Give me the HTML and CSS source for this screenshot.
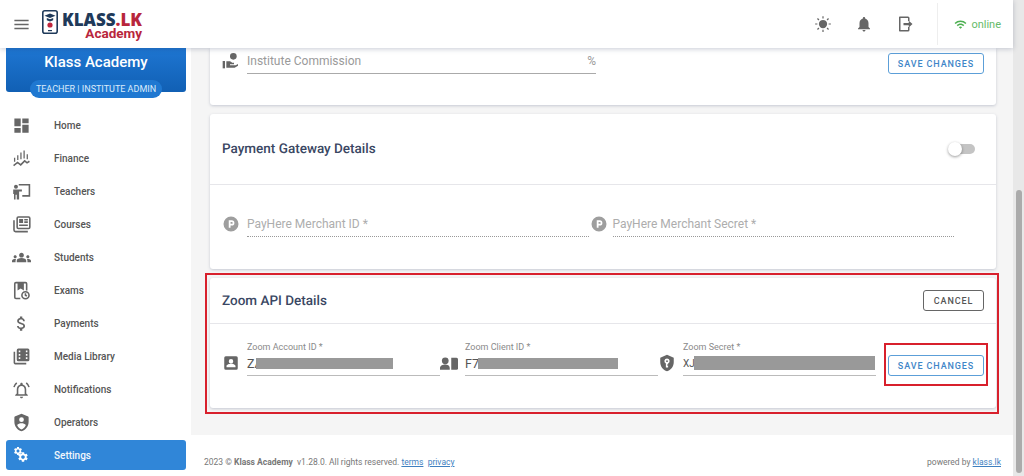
FILE: index.html
```html
<!DOCTYPE html>
<html lang="en">
<head>
    <meta charset="UTF-8">
    <meta name="viewport" content="width=device-width, initial-scale=1.0">
    <title>Klass Academy Settings</title>
    <link rel="stylesheet" href="styles.css">
</head>
<body>
    <svg class="defs" aria-hidden="true">
        <symbol id="gear" viewBox="0 0 24 24"><path d="M19.14 12.94c.04-.3.06-.61.06-.94 0-.32-.02-.64-.07-.94l2.03-1.58c.18-.14.23-.41.12-.61l-1.92-3.32c-.12-.22-.37-.29-.59-.22l-2.39.96c-.5-.38-1.03-.7-1.62-.94l-.36-2.54c-.04-.24-.24-.41-.48-.41h-3.84c-.24 0-.43.17-.47.41l-.36 2.54c-.59.24-1.13.57-1.62.94l-2.39-.96c-.22-.08-.47 0-.59.22L2.74 8.87c-.12.21-.08.47.12.61l2.03 1.58c-.05.3-.09.63-.09.94s.02.64.07.94l-2.03 1.58c-.18.14-.23.41-.12.61l1.92 3.32c.12.22.37.29.59.22l2.39-.96c.5.38 1.03.7 1.62.94l.36 2.54c.05.24.24.41.48.41h3.84c.24 0 .44-.17.47-.41l.36-2.54c.59-.24 1.13-.56 1.62-.94l2.39.96c.22.08.47 0 .59-.22l1.92-3.32c.12-.22.07-.47-.12-.61l-2.01-1.58zM12 15.6c-1.98 0-3.6-1.62-3.6-3.6s1.62-3.6 3.6-3.6 3.6 1.62 3.6 3.6-1.62 3.6-3.6 3.6z"/></symbol>
        <symbol id="payhere" viewBox="0 0 24 24"><path fill-rule="evenodd" d="M12 2a10 10 0 1 0 0 20 10 10 0 0 0 0-20zM9 7h4a3.5 3.5 0 0 1 0 7h-1.600v3H9zm2.400 2.200v2.600H13a1.300 1.300 0 0 0 0-2.600z"/></symbol>
    </svg>

    <div class="window">
        <header class="topbar">
            <svg class="menu-icon" viewBox="0 0 24 24"><path d="M3 18h18v-2H3v2zm0-5h18v-2H3v2zm0-7v2h18V6H3z"/></svg>
            <div class="logo">
                <svg class="logo-mark" viewBox="0 0 16 24">
                    <rect x="0.800" y="0.800" width="14.400" height="22.400" rx="2" fill="#fff" stroke="#1f3a5a" stroke-width="1.600"/>
                    <path d="M8 3.500l5.500 2.300L8 8.100 2.500 5.800z" fill="#1f3a5a"/>
                    <path d="M4.800 8v2.300L8 11.500l3.200-1.200V8L8 9.300z" fill="#1f3a5a"/>
                    <circle cx="8" cy="15" r="2.600" fill="#c0263c"/>
                    <rect x="6" y="20" width="4" height="1.200" fill="#1f3a5a"/>
                </svg>
                <div class="logo-text">
                    <div class="logo-top">KLASS<span class="logo-red">.LK</span></div>
                    <div class="logo-sub">Academy</div>
                </div>
            </div>
            <div class="top-actions">
                <svg class="top-icon" viewBox="0 0 24 24"><circle cx="12" cy="12" r="5.500"/><path d="M11.200 1.500h1.600v3h-1.600zM11.200 19.500h1.600v3h-1.600zM1.500 11.200h3v1.600h-3zM19.500 11.200h3v1.600h-3zM4 5.200L5.200 4l2 2L6 7.200zM16.800 18l1.200-1.200 2 2L18.800 20zM4 18.800l2-2L7.200 18l-2 2zM16.800 6l2-2L20 5.200l-2 2z"/></svg>
                <svg class="top-icon" viewBox="0 0 24 24"><path d="M12 22c1.100 0 2-.9 2-2h-4c0 1.100.89 2 2 2zm6-6v-5c0-3.070-1.640-5.640-4.500-6.320V4c0-.83-.67-1.500-1.500-1.500s-1.500.67-1.500 1.500v.68C7.630 5.360 6 7.920 6 11v5l-2 2v1h16v-1l-2-2z"/></svg>
                <svg class="top-icon" viewBox="0 0 24 24"><path d="M5 2h11a2 2 0 0 1 2 2v4h-2V4H6v16h10v-4h2v4a2 2 0 0 1-2 2H5a1 1 0 0 1-1-1V3a1 1 0 0 1 1-1z"/><path d="M10 10.500h7V7.500l5 4.500-5 4.500v-3h-7z"/></svg>
                <div class="status">
                    <svg class="wifi-icon" viewBox="0 0 24 24"><path d="M1 9l2 2c4.970-4.970 13.030-4.970 18 0l2-2C16.930 2.930 7.080 2.930 1 9zm8 8l3 3 3-3c-1.650-1.660-4.340-1.660-6 0zm-4-4l2 2c2.760-2.760 7.240-2.760 10 0l2-2C15.140 9.140 8.870 9.140 5 13z"/></svg>
                    <span>online</span>
                </div>
            </div>
        </header>

        <div class="layout">
            <aside class="sidebar">
                <div class="banner">
                    <div class="banner-title">Klass Academy</div>
                    <div class="banner-role">TEACHER | INSTITUTE ADMIN</div>
                </div>
                <nav class="nav">
                    <a class="nav-item">
                        <svg class="nav-icon" viewBox="0 0 24 24"><path d="M3 13h8V3H3v10zm0 8h8v-6H3v6zm10 0h8V11h-8v10zm0-18v6h8V3h-8z"/></svg>
                        Home
                    </a>
                    <a class="nav-item">
                        <svg class="nav-icon" viewBox="0 0 24 24"><path d="M6.500 8h1.600v6H6.500zM10.500 4.500h1.600V13h-1.600zM14.500 2h1.600v10h-1.600zM18.500 6.500h1.600V13h-1.600zM2.500 11h1.600v5H2.500z"/><path class="nav-line" d="M2 21l5-4 4 3 5-5 3 2.500 3-2"/></svg>
                        Finance
                    </a>
                    <a class="nav-item">
                        <svg class="nav-icon" viewBox="0 0 24 24"><circle cx="5" cy="6" r="2.500"/><path d="M1.500 9.500h11V12H9v10H6v-6H4.500v6H2.500v-7H1.500z"/><path class="nav-line" d="M8.500 3.500H22v14h-9"/></svg>
                        Teachers
                    </a>
                    <a class="nav-item">
                        <svg class="nav-icon" viewBox="0 0 24 24"><path class="nav-line" d="M2.500 6.500V19a2 2 0 0 0 2 2H20"/><rect class="nav-line" x="6.500" y="2.500" width="16" height="14.500" rx="1.500"/><path d="M9 5h5v5H9zM15.500 5h4.500v2h-4.500zM15.500 8h4.500v2h-4.500zM9 12h11v2H9z"/></svg>
                        Courses
                    </a>
                    <a class="nav-item">
                        <svg class="nav-icon" viewBox="0 0 24 24"><path d="M12 12.750c1.630 0 3.070.39 4.240.9 1.080.48 1.760 1.560 1.760 2.730V18H6v-1.610c0-1.180.68-2.260 1.760-2.730 1.170-.52 2.610-.91 4.240-.91zM4 13c1.100 0 2-.9 2-2s-.9-2-2-2-2 .9-2 2 .9 2 2 2zm1.130 1.100c-.37-.06-.74-.1-1.130-.1-.99 0-1.930.21-2.780.58C.48 14.900 0 15.620 0 16.430V18h4.500v-1.610c0-.83.23-1.610.63-2.290zM20 13c1.100 0 2-.9 2-2s-.9-2-2-2-2 .9-2 2 .9 2 2 2zm4 3.430c0-.81-.48-1.530-1.220-1.850-.85-.37-1.790-.58-2.780-.58-.39 0-.76.04-1.130.1.4.68.63 1.460.63 2.290V18H24v-1.570zM12 6c1.660 0 3 1.340 3 3s-1.340 3-3 3-3-1.340-3-3 1.340-3 3-3z"/></svg>
                        Students
                    </a>
                    <a class="nav-item">
                        <svg class="nav-icon" viewBox="0 0 24 24"><path class="nav-line" d="M10.500 22H5a1.500 1.500 0 0 1-1.500-1.500v-17A1.500 1.500 0 0 1 5 2h12a1.500 1.500 0 0 1 1.500 1.500V12"/><path d="M7 2.500h8V12l-4-2.500L7 12z"/><circle class="nav-line" cx="17" cy="18" r="4.500"/><path class="nav-line" d="M17 15.500V18l1.800 1.200"/></svg>
                        Exams
                    </a>
                    <a class="nav-item">
                        <svg class="nav-icon" viewBox="0 0 24 24"><path d="M11.800 10.900c-2.270-.59-3-1.200-3-2.150 0-1.090 1.010-1.850 2.700-1.850 1.780 0 2.440.85 2.500 2.100h2.210c-.07-1.720-1.120-3.300-3.210-3.810V3h-3v2.160c-1.940.42-3.500 1.680-3.500 3.610 0 2.310 1.910 3.460 4.700 4.130 2.500.6 3 1.480 3 2.410 0 .69-.49 1.790-2.700 1.790-2.060 0-2.870-.92-2.980-2.100h-2.200c.12 2.190 1.760 3.420 3.680 3.830V21h3v-2.150c1.950-.37 3.500-1.500 3.500-3.550 0-2.840-2.430-3.810-4.700-4.400z"/></svg>
                        Payments
                    </a>
                    <a class="nav-item">
                        <svg class="nav-icon" viewBox="0 0 24 24"><path d="M4 6H2v14c0 1.100.9 2 2 2h14v-2H4V6z"/><path fill-rule="evenodd" d="M8 2h12a2 2 0 0 1 2 2v12a2 2 0 0 1-2 2H8a2 2 0 0 1-2-2V4a2 2 0 0 1 2-2zm.5 2.500v2.200h2V4.500zm0 4.200v2.200h2V8.700zm0 4.200v2.200h2v-2.200zm9-8.400v2.200h2V4.500zm0 4.200v2.200h2V8.700zm0 4.200v2.200h2v-2.200z"/></svg>
                        Media Library
                    </a>
                    <a class="nav-item">
                        <svg class="nav-icon" viewBox="0 0 24 24"><path d="M12 23c1.100 0 2-.9 2-2h-4c0 1.100.9 2 2 2zm6-6v-5c0-3.070-1.630-5.640-4.500-6.320V5c0-.83-.67-1.500-1.500-1.500s-1.500.67-1.500 1.500v.68C7.640 6.360 6 8.920 6 12v5l-2 2v1h16v-1l-2-2zm-2 1H8v-6c0-2.480 1.510-4.500 4-4.500s4 2.020 4 4.500v6z"/><path class="nav-line" d="M6 3.500A10 10 0 0 0 2.500 9M18 3.500A10 10 0 0 1 21.500 9"/></svg>
                        Notifications
                    </a>
                    <a class="nav-item">
                        <svg class="nav-icon" viewBox="0 0 24 24"><path fill-rule="evenodd" d="M12 1L3.500 4.500A1.500 1.500 0 0 0 3 5.600V11c0 5.550 3.840 10.740 9 12 5.160-1.260 9-6.450 9-12V5.600a1.500 1.500 0 0 0-.5-1.100zm0 4.500a3 3 0 1 1 0 6 3 3 0 0 1 0-6zm-5.500 9.800c1.300-1.500 3.300-2.300 5.500-2.300s4.200.8 5.500 2.300c-1 2.500-3 4.600-5.500 5.500-2.500-.9-4.500-3-5.500-5.500z"/></svg>
                        Operators
                    </a>
                    <a class="nav-item active">
                        <span class="gears">
                            <svg class="gear-small"><use href="#gear"/></svg>
                            <svg class="gear-big"><use href="#gear"/></svg>
                        </span>
                        Settings
                    </a>
                </nav>
            </aside>

            <div class="content">
                <main class="cards">
                    <section class="card card-cut">
                        <div class="commission-row">
                            <svg class="commission-icon" viewBox="0 0 24 24"><path d="M1 12h3.500v11H1z"/><circle cx="17" cy="5" r="5"/><path d="M6.500 12.500h4.500c1.500 0 3 1 4 2h3v2.500h-6v1.500h8.500l3.500-2 1 2-6 3.500H6.500z"/></svg>
                            <div class="commission-input">
                                <span>Institute Commission</span>
                                <span>%</span>
                            </div>
                            <button class="btn btn-blue">SAVE CHANGES</button>
                        </div>
                    </section>

                    <section class="card">
                        <div class="card-head card-head-tall">
                            <h3>Payment Gateway Details</h3>
                            <div class="switch"><span class="switch-knob"></span></div>
                        </div>
                        <div class="gateway-row">
                            <svg class="field-icon muted"><use href="#payhere"/></svg>
                            <div class="dotted-input">PayHere Merchant ID *</div>
                            <svg class="field-icon muted"><use href="#payhere"/></svg>
                            <div class="dotted-input dotted-second">PayHere Merchant Secret *</div>
                        </div>
                    </section>

                    <section class="card card-marked">
                        <div class="card-head card-head-zoom">
                            <h3>Zoom API Details</h3>
                            <button class="btn btn-dark">CANCEL</button>
                        </div>
                        <div class="zoom-row">
                            <svg class="field-icon" viewBox="0 0 24 24"><path fill-rule="evenodd" d="M5 3h14a2 2 0 0 1 2 2v14a2 2 0 0 1-2 2H5a2 2 0 0 1-2-2V5a2 2 0 0 1 2-2zm7 3.500a3 3 0 1 0 0 6 3 3 0 0 0 0-6zM6 17.500h12V16c0-2-4-3.100-6-3.100S6 14 6 16z"/></svg>
                            <div class="zoom-field">
                                <label>Zoom Account ID *</label>
                                <div class="zoom-value"><span>ZA</span><span class="redact redact-account"></span></div>
                            </div>
                            <svg class="field-icon" viewBox="0 0 24 24"><path d="M15 5h7a2 2 0 0 1 2 2v12a2 2 0 0 1-2 2h-7z"/><circle cx="7" cy="9" r="4.500"/><path d="M0 21v-2.500C0 15.500 4 14 7 14s6 1.500 6 4.500V21z"/></svg>
                            <div class="zoom-field">
                                <label>Zoom Client ID *</label>
                                <div class="zoom-value"><span>F7</span><span class="redact redact-client"></span></div>
                            </div>
                            <svg class="field-icon" viewBox="0 0 24 24"><path fill-rule="evenodd" d="M12 1L3 5v6c0 5.550 3.840 10.740 9 12 5.160-1.260 9-6.450 9-12V5zm0 5a3.500 3.500 0 0 1 1.500 6.660V14h-1.500v1.200h1.500V18h-3v-5.340A3.500 3.500 0 0 1 12 6zm0 2.300a1.200 1.200 0 1 0 0 2.400 1.200 1.200 0 0 0 0-2.400z"/></svg>
                            <div class="zoom-field">
                                <label>Zoom Secret *</label>
                                <div class="zoom-value zoom-value-small"><span>XJ</span><span class="redact redact-secret"></span></div>
                            </div>
                            <button class="btn btn-blue btn-marked">SAVE CHANGES</button>
                        </div>
                    </section>
                </main>

                <footer class="footer">
                    <div>2023 &copy; <b>Klass Academy</b>&nbsp; v1.28.0. All rights reserved. <a>terms</a>&nbsp; <a>privacy</a></div>
                    <div>powered by <a>klass.lk</a></div>
                </footer>
            </div>
        </div>
    </div>

    <div class="scrollbar"><div class="scroll-thumb"></div></div>
</body>
</html>
```

FILE: styles.css
```css
* {
    box-sizing: border-box;
}

html, body {
    height: 100%;
}

body {
    margin: 0;
    display: flex;
    font-family: Roboto, "Liberation Sans", sans-serif;
    background-color: #f5f5f5;
    overflow: hidden;
}

.defs {
    position: absolute;
    width: 0;
    height: 0;
}

.window {
    flex: 1;
    min-width: 0;
    display: flex;
    flex-direction: column;
}

/* top bar */
.topbar {
    position: relative;
    z-index: 2;
    height: 48px;
    flex-shrink: 0;
    display: flex;
    align-items: center;
    padding-left: 12px;
    background-color: #fff;
    box-shadow: 0 1px 5px rgba(40, 50, 90, 0.25);
}

.menu-icon {
    width: 19px;
    height: 19px;
    fill: #666;
}

.logo {
    display: flex;
    align-items: center;
    gap: 4px;
    margin-left: 11px;
}

.logo-mark {
    width: 16px;
    height: 24px;
    margin-bottom: 4px;
}

.logo-text {
    margin-top: 5px;
    text-align: right;
}

.logo-top {
    font-family: "Open Sans", Roboto, sans-serif;
    font-size: 17px;
    font-weight: 800;
    line-height: 14px;
    color: #1f3a5a;
}

.logo-red {
    color: #b8263c;
}

.logo-sub {
    font-size: 13.5px;
    font-weight: 700;
    line-height: 13px;
    color: #b8263c;
}

.top-actions {
    margin-left: auto;
    display: flex;
    align-items: center;
    height: 100%;
}

.top-icon {
    width: 18px;
    height: 18px;
    margin-right: 23px;
    fill: #666;
}

.status {
    height: 42px;
    display: flex;
    align-items: center;
    gap: 4px;
    padding: 0 12px 0 16px;
    border-left: 1px solid #eee;
    font-size: 11px;
    color: #66bb6a;
}

.wifi-icon {
    width: 13px;
    height: 13px;
    fill: #4caf50;
}

/* sidebar */
.layout {
    flex: 1;
    min-height: 0;
    display: flex;
}

.sidebar {
    width: 191px;
    flex-shrink: 0;
    padding: 0 5px 0 6px;
    background-color: #fff;
}

.banner {
    position: relative;
    height: 44px;
    padding-top: 5px;
    border-radius: 0 0 3px 3px;
    background: linear-gradient(#1e76d2, #1160b4);
    text-align: center;
    color: #fff;
    font-size: 15px;
    font-weight: 500;
}

.banner-role {
    position: absolute;
    left: 24px;
    top: 32px;
    width: 132px;
    height: 18px;
    line-height: 18px;
    border-radius: 9px;
    background-color: #1f78d1;
    font-size: 9px;
    font-weight: 400;
    color: #dcebfa;
}

.nav {
    margin-top: 17px;
    display: flex;
    flex-direction: column;
}

.nav-item {
    height: 33px;
    display: flex;
    align-items: center;
    padding-left: 6px;
    font-size: 10px;
    font-weight: 500;
    color: #555;
}

.nav-icon {
    width: 19px;
    height: 19px;
    margin-right: 23px;
    fill: #666;
    flex-shrink: 0;
}

.nav-line {
    fill: none;
    stroke: #666;
    stroke-width: 2;
}

.nav-item.active {
    height: 30px;
    margin-top: 1px;
    border-radius: 3px;
    background-color: #3086d8;
    color: #f2f7fc;
}

.gears {
    position: relative;
    width: 19px;
    height: 19px;
    margin-right: 23px;
    flex-shrink: 0;
}

.gear-small {
    position: absolute;
    left: 1px;
    top: 0;
    width: 10px;
    height: 10px;
    fill: #fff;
}

.gear-big {
    position: absolute;
    right: 2px;
    bottom: 2px;
    width: 12px;
    height: 12px;
    fill: #fff;
}

/* content */
.content {
    flex: 1;
    min-width: 0;
    display: flex;
    flex-direction: column;
}

.cards {
    flex: 1;
    min-height: 0;
    display: flex;
    flex-direction: column;
    gap: 9px;
    padding-left: 19px;
    padding-right: 17px;
}

.card {
    background-color: #fff;
    border-radius: 3px;
    box-shadow: 0 1px 3px rgba(60, 70, 110, 0.25);
}

.card-cut {
    height: 57px;
    border-radius: 0 0 3px 3px;
}

.commission-row {
    display: flex;
    align-items: flex-start;
    padding: 5px 12px 0 12px;
}

.commission-icon {
    width: 16px;
    height: 16px;
    flex-shrink: 0;
    fill: #666;
}

.field-icon {
    width: 18px;
    height: 18px;
    flex-shrink: 0;
    fill: #666;
}

.field-icon.muted {
    fill: #9e9e9e;
}

.commission-input {
    width: 349px;
    height: 21px;
    margin-left: 9px;
    display: flex;
    justify-content: space-between;
    border-bottom: 1px solid #aaa;
    font-size: 12px;
    line-height: 16px;
    color: #9a9a9a;
}

.btn {
    position: relative;
    font-family: inherit;
    font-size: 9px;
    font-weight: 500;
    letter-spacing: 0.9px;
    height: 21px;
    padding: 0;
    background-color: #fff;
    border-radius: 3px;
    border: 1px solid;
}

.btn-blue {
    width: 96px;
    margin-left: auto;
    border-color: #5c9fd8;
    color: #3f86c8;
}

.btn-dark {
    width: 61px;
    border-color: #666;
    color: #555;
}

.card-head {
    display: flex;
    align-items: center;
    justify-content: space-between;
    padding: 0 12px;
    border-bottom: 1px solid #e6e6ea;
}

.card-head-zoom {
    height: 46px;
}

.card-head-tall {
    height: 71px;
}

.card-head h3 {
    margin: 0;
    font-size: 13.5px;
    font-weight: 500;
    color: #3a4763;
    text-rendering: geometricPrecision;
}

.switch {
    position: relative;
    width: 23px;
    height: 10px;
    margin-right: 9px;
    border-radius: 5px;
    background-color: #c4c4c4;
}

.switch-knob {
    position: absolute;
    left: -4px;
    top: -2px;
    width: 14px;
    height: 14px;
    border-radius: 50%;
    background-color: #fff;
    box-shadow: 0 1px 3px rgba(0, 0, 0, 0.4);
}

.gateway-row {
    height: 84px;
    display: flex;
    align-items: flex-start;
    padding: 30px 42px 0 12px;
}

.dotted-input {
    flex: 1;
    height: 22px;
    margin-left: 7px;
    margin-right: 1px;
    border-bottom: 1px dotted #999;
    font-size: 12px;
    line-height: 18px;
    color: #adadad;
}

.dotted-second {
    margin-left: 5px;
    margin-right: 0;
}

/* the red boxes drawn over the screenshot */
.card-marked {
    position: relative;
}

.card-marked::after {
    content: "";
    position: absolute;
    inset: -5px -3px -6px -5px;
    border: 2px solid #d8202c;
    pointer-events: none;
}

.btn-marked::after {
    content: "";
    position: absolute;
    inset: -13px -5px -11px -5px;
    border: 2px solid #d8202c;
}

.zoom-row {
    height: 84px;
    display: flex;
    align-items: flex-start;
    padding: 17px 12px 0 12px;
}

.zoom-row .field-icon {
    margin-top: 13px;
}

.zoom-field {
    width: 193px;
    height: 35px;
    margin-left: 7px;
    border-bottom: 1px solid #bbb;
}

.zoom-field label {
    display: block;
    height: 12px;
    line-height: 12px;
    font-size: 9px;
    color: #8a8a8a;
}

.zoom-value {
    display: flex;
    align-items: center;
    height: 20px;
    font-size: 12.5px;
    color: #555;
}

.zoom-value-small {
    font-size: 10px;
}

.redact {
    height: 11px;
    background-color: #999;
}

.redact-account {
    width: 137px;
    margin-left: -7px;
}

.redact-client {
    width: 140px;
    margin-left: -1px;
}

.redact-secret {
    width: 181px;
    height: 14px;
    margin-left: -1px;
}

.btn-marked {
    margin-top: 14px;
}

/* footer */
.footer {
    height: 41px;
    flex-shrink: 0;
    display: flex;
    align-items: flex-end;
    justify-content: space-between;
    padding: 0 12px 9px 13px;
    background-color: #fff;
    font-size: 8.5px;
    color: #777;
}

.footer a {
    color: #3f7fbf;
    text-decoration: underline;
}

/* page scrollbar */
.scrollbar {
    width: 11px;
    flex-shrink: 0;
    padding: 190px 2px 3px 3px;
    background-color: #e8e8e8;
}

.scroll-thumb {
    height: 100%;
    border-radius: 3px;
    background-color: #ababab;
}
```
